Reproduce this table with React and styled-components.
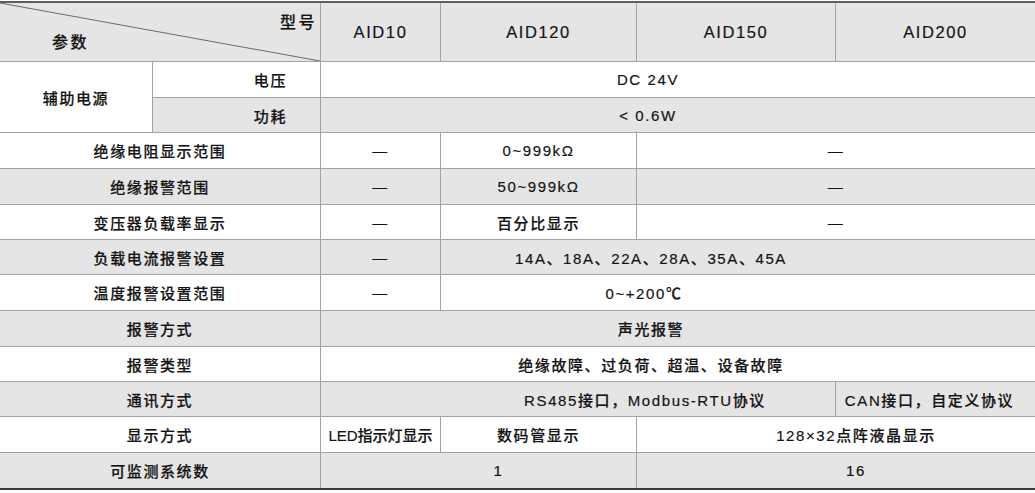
import React from "react";
import styled, { createGlobalStyle } from "styled-components";

const Global = createGlobalStyle`
  html, body { margin: 0; padding: 0; background: #ffffff; }
  body {
    font-family: "Liberation Sans", "Noto Sans CJK SC", sans-serif;
    color: #141414;
  }
`;

const GRAY = "#e5e5e5";
const WHITE = "#ffffff";

const Table = styled.div`
  margin-top: 1px;
  width: 1035px;
  display: grid;
  grid-template-columns: 152px 167px 119px 195px 198px 199px;
  grid-template-rows: 58px 35px 34px 35px 35px 34px 34px 35px 35px 34px 34px 35px 35px;
  column-gap: 1px;
  row-gap: 1px;
  background: #a3a3a3;
  border-top: 2px solid #5e5e5e;
  border-bottom: 2px solid #3a3a3a;
`;

const Cell = styled.div`
  grid-column: span ${(p) => p.$span || 1};
  grid-row: span ${(p) => p.$rows || 1};
  background: ${(p) => (p.$gray ? GRAY : WHITE)};
  display: flex;
  align-items: center;
  justify-content: ${(p) => (p.$right ? "flex-end" : "center")};
  padding-left: ${(p) => (p.$dx > 0 ? p.$dx * 2 : 0)}px;
  padding-right: ${(p) => (p.$right ? 33 : p.$dx < 0 ? -p.$dx * 2 : 0)}px;
  font-size: 15px;
  font-weight: 500;
  letter-spacing: ${(p) => (p.$tight ? 0 : 1.6)}px;
  white-space: nowrap;
  overflow: hidden;
  -webkit-text-stroke: 0.2px #141414;
`;

const HeadCell = styled(Cell)`
  font-size: 16.5px;
  font-weight: 400;
  letter-spacing: 1.6px;
`;

const CornerCell = styled.div`
  grid-column: span 2;
  position: relative;
  background: ${GRAY};
  display: flex;
  flex-direction: column;
  padding-top: 10px;
  font-size: 16px;
  font-weight: 500;
  letter-spacing: 2.5px;
  -webkit-text-stroke: 0.2px #141414;
`;

const Diagonal = styled.svg`
  position: absolute;
  inset: 0;
  width: 100%;
  height: 100%;
`;

const ModelLabel = styled.span`
  align-self: flex-end;
  line-height: 20px;
  padding-right: 3px;
`;

const ParamLabel = styled.span`
  align-self: flex-start;
  line-height: 20px;
  padding-left: 52px;
`;

const DASH = "—";

const rows = [
  {
    gray: false,
    cells: [
      { t: "辅助电源", rows: 2, gray: false },
      { t: "电压", right: true },
      { t: "DC 24V", span: 4, dx: -30 },
    ],
  },
  {
    gray: true,
    cells: [
      { t: "功耗", right: true },
      { t: "< 0.6W", span: 4, dx: -30 },
    ],
  },
  {
    gray: false,
    cells: [
      { t: "绝缘电阻显示范围", span: 2 },
      { t: DASH },
      { t: "0~999kΩ" },
      { t: DASH, span: 2 },
    ],
  },
  {
    gray: true,
    cells: [
      { t: "绝缘报警范围", span: 2 },
      { t: DASH },
      { t: "50~999kΩ" },
      { t: DASH, span: 2 },
    ],
  },
  {
    gray: false,
    cells: [
      { t: "变压器负载率显示", span: 2 },
      { t: DASH },
      { t: "百分比显示" },
      { t: DASH, span: 2 },
    ],
  },
  {
    gray: true,
    cells: [
      { t: "负载电流报警设置", span: 2 },
      { t: DASH },
      { t: "14A、18A、22A、28A、35A、45A", span: 3, dx: -87 },
    ],
  },
  {
    gray: false,
    cells: [
      { t: "温度报警设置范围", span: 2 },
      { t: DASH },
      { t: "0~+200℃", span: 3, dx: -94 },
    ],
  },
  {
    gray: true,
    cells: [
      { t: "报警方式", span: 2 },
      { t: "声光报警", span: 4, dx: -27 },
    ],
  },
  {
    gray: false,
    cells: [
      { t: "报警类型", span: 2 },
      { t: "绝缘故障、过负荷、超温、设备故障", span: 4, dx: -27 },
    ],
  },
  {
    gray: true,
    cells: [
      { t: "通讯方式", span: 2 },
      { t: "RS485接口，Modbus-RTU协议", span: 3, dx: 67 },
      { t: "CAN接口，自定义协议", dx: -6 },
    ],
  },
  {
    gray: false,
    cells: [
      { t: "显示方式", span: 2 },
      { t: "LED指示灯显示", tight: true },
      { t: "数码管显示" },
      { t: "128×32点阵液晶显示", span: 2, dx: 20 },
    ],
  },
  {
    gray: true,
    cells: [
      { t: "可监测系统数", span: 2 },
      { t: "1", span: 2, dx: 20 },
      { t: "16", span: 2, dx: 20 },
    ],
  },
];

const models = ["AID10", "AID120", "AID150", "AID200"];

export default function App() {
  return (
    <>
      <Global />
      <Table>
        <CornerCell>
          <Diagonal viewBox="0 0 319 58" preserveAspectRatio="none">
            <line x1="0" y1="0" x2="319" y2="58" stroke="#6a6a6a" strokeWidth="1" />
          </Diagonal>
          <ModelLabel>型号</ModelLabel>
          <ParamLabel>参数</ParamLabel>
        </CornerCell>
        {models.map((m) => (
          <HeadCell key={m} $gray>
            {m}
          </HeadCell>
        ))}
        {rows.map((row, ri) =>
          row.cells.map((c, ci) => (
            <Cell
              key={`${ri}-${ci}`}
              $span={c.span}
              $rows={c.rows}
              $gray={c.gray === undefined ? row.gray : c.gray}
              $right={c.right}
              $dx={c.dx || 0}
              $tight={c.tight}
            >
              {c.t}
            </Cell>
          ))
        )}
      </Table>
    </>
  );
}
